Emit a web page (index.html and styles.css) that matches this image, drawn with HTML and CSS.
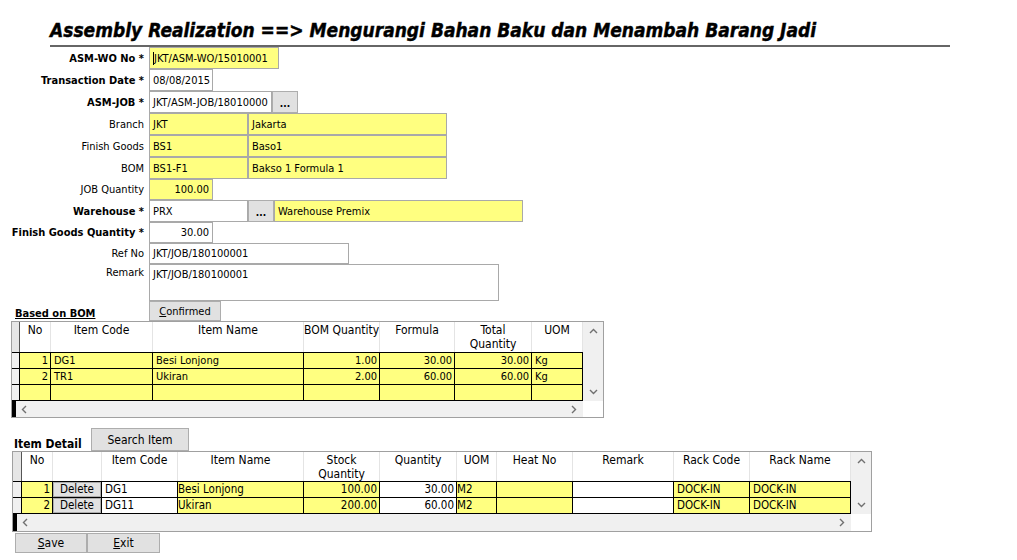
FILE: index.html
```html
<!DOCTYPE html>
<html>
<head>
<meta charset="utf-8">
<title>Assembly Realization</title>
<link rel="stylesheet" href="styles.css">
</head>
<body>
<h1 class="title">Assembly Realization ==&gt; Mengurangi Bahan Baku dan Menambah Barang Jadi</h1>

<div class="form">
  <div class="row h22"><div class="lbl b">ASM-WO No *</div><div class="fld y w130"><span class="caret"></span>JKT/ASM-WO/15010001</div></div>
  <div class="row h22"><div class="lbl b">Transaction Date *</div><div class="fld w64">08/08/2015</div></div>
  <div class="row h22"><div class="lbl b">ASM-JOB *</div><div class="fld w123">JKT/ASM-JOB/18010000</div><div class="btn dots w26">...</div></div>
  <div class="row h22"><div class="lbl">Branch</div><div class="fld y w99">JKT</div><div class="fld y w199">Jakarta</div></div>
  <div class="row h22"><div class="lbl">Finish Goods</div><div class="fld y w99">BS1</div><div class="fld y w199">Baso1</div></div>
  <div class="row h22"><div class="lbl">BOM</div><div class="fld y w99">BS1-F1</div><div class="fld y w199">Bakso 1 Formula 1</div></div>
  <div class="row h21"><div class="lbl">JOB Quantity</div><div class="fld y w64 num">100.00</div></div>
  <div class="row h22"><div class="lbl b">Warehouse *</div><div class="fld w99">PRX</div><div class="btn dots w26">...</div><div class="fld y w249">Warehouse Premix</div></div>
  <div class="row h21"><div class="lbl b">Finish Goods Quantity *</div><div class="fld w64 num">30.00</div></div>
  <div class="row h21"><div class="lbl">Ref No</div><div class="fld w200">JKT/JOB/180100001</div></div>
  <div class="row h37"><div class="lbl top">Remark</div><div class="fld area w350">JKT/JOB/180100001</div></div>
  <div class="row h20 conf-row"><div class="section-lbl">Based on BOM</div><div class="btn w72"><u>C</u>onfirmed</div></div>
</div>

<div class="grid g1">
  <div class="gbody">
    <div class="grow head">
      <div class="ind"></div><div>No</div><div>Item Code</div><div>Item Name</div><div>BOM Quantity</div><div>Formula</div><div>Total<br>Quantity</div><div>UOM</div>
    </div>
    <div class="grow data">
      <div class="ind"></div><div class="num">1</div><div>DG1</div><div>Besi Lonjong</div><div class="num">1.00</div><div class="num">30.00</div><div class="num">30.00</div><div>Kg</div>
    </div>
    <div class="grow data">
      <div class="ind"></div><div class="num">2</div><div>TR1</div><div>Ukiran</div><div class="num">2.00</div><div class="num">60.00</div><div class="num">60.00</div><div>Kg</div>
    </div>
    <div class="grow data last">
      <div class="ind"></div><div></div><div></div><div></div><div></div><div></div><div></div><div></div>
    </div>
  </div>
  <div class="vscroll">
    <svg width="9" height="6" viewBox="0 0 9 6"><path d="M1 5L4.5 1.5L8 5" fill="none" stroke="#707070" stroke-width="1.4"/></svg>
    <svg width="9" height="6" viewBox="0 0 9 6"><path d="M1 1L4.5 4.5L8 1" fill="none" stroke="#707070" stroke-width="1.4"/></svg>
  </div>
  <div class="hscroll">
    <span class="bar"></span>
    <svg class="la" width="6" height="9" viewBox="0 0 6 9"><path d="M5 1L1.5 4.5L5 8" fill="none" stroke="#707070" stroke-width="1.4"/></svg>
    <svg class="ra" width="6" height="9" viewBox="0 0 6 9"><path d="M1 1L4.5 4.5L1 8" fill="none" stroke="#707070" stroke-width="1.4"/></svg>
  </div>
  <div class="corner"></div>
</div>

<div class="detail-row">
  <div class="section-lbl2">Item Detail</div>
  <div class="btn w98">Search Item</div>
</div>

<div class="grid g2">
  <div class="gbody">
    <div class="grow head">
      <div class="ind"></div><div>No</div><div></div><div>Item Code</div><div>Item Name</div><div>Stock<br>Quantity</div><div>Quantity</div><div>UOM</div><div>Heat No</div><div>Remark</div><div>Rack Code</div><div>Rack Name</div>
    </div>
    <div class="grow data">
      <div class="ind"></div><div class="num">1</div><div class="del"><span>Delete</span></div><div class="w">DG1</div><div class="tight">Besi Lonjong</div><div class="num">100.00</div><div class="num w">30.00</div><div class="tight">M2</div><div></div><div class="w"></div><div>DOCK-IN</div><div>DOCK-IN</div>
    </div>
    <div class="grow data last">
      <div class="ind"></div><div class="num">2</div><div class="del"><span>Delete</span></div><div class="w">DG11</div><div class="tight">Ukiran</div><div class="num">200.00</div><div class="num w">60.00</div><div class="tight">M2</div><div></div><div class="w"></div><div>DOCK-IN</div><div>DOCK-IN</div>
    </div>
  </div>
  <div class="vscroll">
    <svg width="9" height="6" viewBox="0 0 9 6"><path d="M1 5L4.5 1.5L8 5" fill="none" stroke="#707070" stroke-width="1.4"/></svg>
    <svg width="9" height="6" viewBox="0 0 9 6"><path d="M1 1L4.5 4.5L8 1" fill="none" stroke="#707070" stroke-width="1.4"/></svg>
  </div>
  <div class="hscroll">
    <span class="bar"></span>
    <svg class="la" width="6" height="9" viewBox="0 0 6 9"><path d="M5 1L1.5 4.5L5 8" fill="none" stroke="#707070" stroke-width="1.4"/></svg>
    <svg class="ra" width="6" height="9" viewBox="0 0 6 9"><path d="M1 1L4.5 4.5L1 8" fill="none" stroke="#707070" stroke-width="1.4"/></svg>
  </div>
  <div class="corner"></div>
</div>

<div class="actions">
  <div class="btn w72"><u>S</u>ave</div>
  <div class="btn w73"><u>E</u>xit</div>
</div>
</body>
</html>
```

FILE: styles.css
```css
* { box-sizing: border-box; }

body {
  margin: 0;
  background: #ffffff;
  color: #000000;
  font-family: "DejaVu Sans Condensed", "DejaVu Sans", sans-serif;
  font-size: 11px;
}

.title {
  margin: 0 0 0 50px;
  width: 900px;
  padding: 18px 0 3px 0;
  line-height: 24px;
  font-size: 19px;
  font-weight: bold;
  font-style: italic;
  -webkit-text-stroke: 0.4px #000000;
  border-bottom: 2px solid #666666;
  white-space: nowrap;
}

/* ---------- form ---------- */
.form { display: flex; flex-direction: column; }
.row { display: flex; align-items: stretch; }
.h22 { height: 22px; }
.h21 { height: 21px; }
.h20 { height: 20px; }
.h37 { height: 37px; }

.lbl {
  width: 145px;
  margin-right: 4px;
  padding-right: 1px;
  text-align: right;
  white-space: nowrap;
  display: flex;
  align-items: center;
  justify-content: flex-end;
}
.lbl.b { font-weight: bold; }
.lbl.top { align-items: flex-start; padding-top: 2px; }

.fld {
  border: 1px solid #a9a9a9;
  background: #ffffff;
  padding: 0 3px;
  white-space: nowrap;
  overflow: hidden;
  display: flex;
  align-items: center;
}
.fld.y { background: #ffff80; }
.fld.num { justify-content: flex-end; }
.fld.area { align-items: flex-start; padding-top: 3px; }
.caret { display: inline-block; width: 1px; height: 13px; background: #000; }

.w26 { width: 26px; }
.w64 { width: 64px; }
.w72 { width: 72px; }
.w73 { width: 73px; }
.w98 { width: 98px; }
.w99 { width: 99px; }
.w123 { width: 123px; }
.w130 { width: 130px; }
.w199 { width: 199px; }
.w200 { width: 200px; }
.w249 { width: 249px; }
.w350 { width: 350px; }

.btn {
  background: #e1e1e1;
  border: 1px solid #adadad;
  display: flex;
  align-items: center;
  justify-content: center;
  white-space: nowrap;
}
.btn.dots { font-weight: bold; align-items: flex-end; padding-bottom: 3px; font-size: 10px; }

.section-lbl {
  width: 149px;
  padding-left: 15px;
  font-weight: bold;
  text-decoration: underline;
  display: flex;
  align-items: flex-end;
  padding-bottom: 1px;
}

/* ---------- grids ---------- */
.grid {
  display: grid;
  border: 1px solid #a0a0a0;
  background: #ffffff;
}
.g1 {
  margin-left: 11px;
  width: 593px;
  grid-template-columns: 571px 20px;
  grid-template-rows: 79px 16px;
  --cols: 8px 31px 102px 151px 76px 75px 77px 51px;
}
.g2 {
  margin-left: 12px;
  width: 860px;
  grid-template-columns: 838px 20px;
  grid-template-rows: 62px 17px;
  font-size: 11.5px;
  --cols: 9px 31px 49px 76px 126px 76px 77px 40px 76px 101px 76px 101px;
}

.gbody { display: flex; flex-direction: column; }
.grow { display: grid; grid-template-columns: var(--cols); }
.grow > div { white-space: nowrap; overflow: hidden; }

.grow.head { height: 30px; background: #ffffff; }
.g2 .grow.head { height: 29px; }
.grow.head > div {
  border-right: 1px solid #e4e4e4;
  text-align: center;
  font-size: 12px;
  line-height: 14px;
  padding-top: 1px;
}
.grow.head > .ind { background: #e6e6e6; border-right: 1px solid #555555; }

.grow.data {
  height: 16px;
  border-top: 1px solid #000000;
  background: #ffff80;
}
.grow.data.last { height: 17px; border-bottom: 1px solid #000000; }
.grow.data > div {
  border-right: 1px solid #000000;
  line-height: 15px;
  padding: 0 2px 0 3px;
}
.grow.data > .ind { background: #f0f0f0; padding: 0; }
.grow.data > .num { text-align: right; padding: 0 2px 0 2px; }
.grow.data > .w { background: #ffffff; }
.grow.data > .tight { padding-left: 0; }
.grow.data > .del { padding: 0; background: #ffffff; }
.del span {
  display: flex;
  height: 100%;
  align-items: center;
  justify-content: center;
  background: #e1e1e1;
  border: 1px solid #adadad;
}

.vscroll {
  background: #f0f0f0;
  display: flex;
  flex-direction: column;
  justify-content: space-between;
  align-items: center;
  padding: 6px 0 6px 0;
}
.hscroll {
  background: #f0f0f0;
  display: flex;
  align-items: center;
}
.hscroll .bar { width: 4px; height: 100%; background: #000000; }
.hscroll .la { margin-left: 5px; }
.hscroll .ra { margin-left: auto; margin-right: 6px; }
.corner { background: #ffffff; }

/* ---------- item detail ---------- */
.detail-row {
  display: flex;
  height: 23px;
  margin-top: 10px;
}
.section-lbl2 {
  width: 91px;
  padding-left: 14px;
  font-weight: bold;
  font-size: 12px;
  display: flex;
  align-items: flex-end;
}
.detail-row .btn { font-size: 12px; }

.actions {
  display: flex;
  margin: 1px 0 0 15px;
  height: 20px;
}
.actions .btn { font-size: 12px; }
```
